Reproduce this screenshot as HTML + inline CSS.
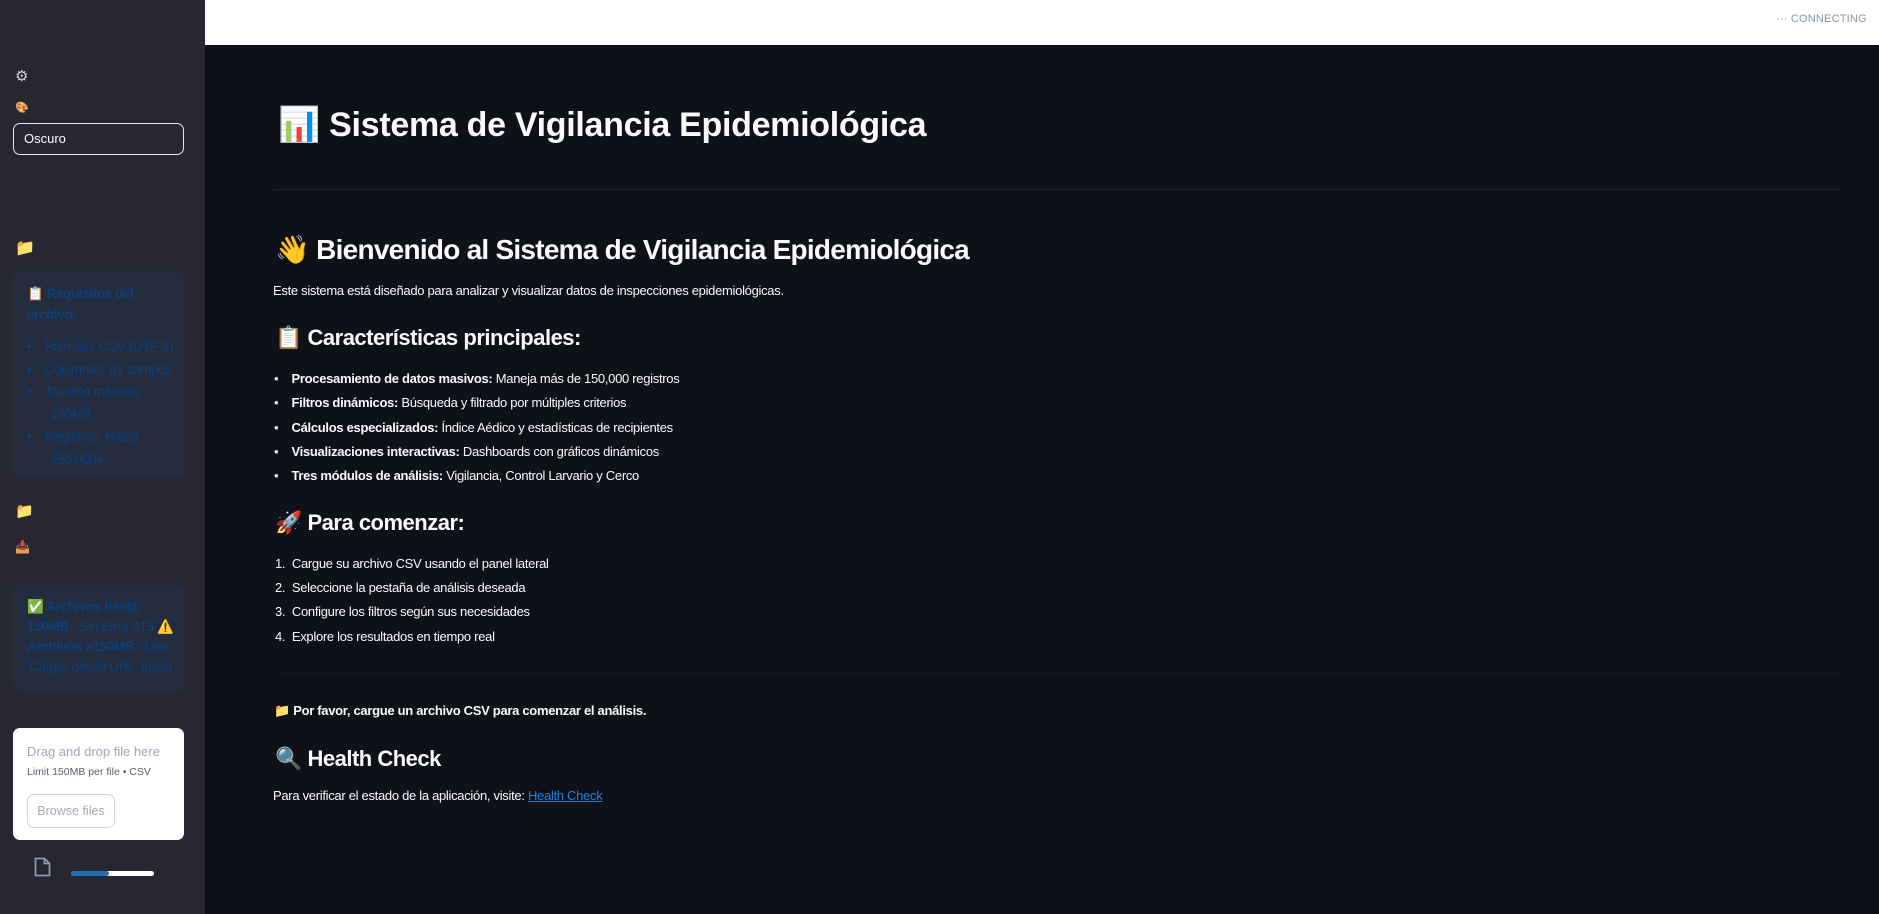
<!DOCTYPE html>
<html><head><meta charset="utf-8"><style>
*{margin:0;padding:0;box-sizing:border-box}
body{width:1879px;height:914px;overflow:hidden;background:#0e1117;font-family:"Liberation Sans","Noto Sans CJK JP",sans-serif;color:#fafafa;position:relative}
.a{position:absolute;white-space:nowrap}
#side{position:absolute;left:0;top:0;width:205px;height:914px;background:#262730}
#top{position:absolute;left:205px;top:0;width:1674px;height:45px;background:#fff}
.t{font-size:13px;letter-spacing:-0.3px}
.blue{color:#0d3f7a}
.s{font-size:13.5px;letter-spacing:-0.4px}
</style></head><body>
<div id="side"></div>
<div id="top"></div>
<div class="a" style="left:1776px;top:13px;font-size:11px;color:#8a93a8;letter-spacing:0.2px">··· CONNECTING</div>

<!-- sidebar -->
<div class="a" style="left:15px;top:67px;font-size:15px;color:#d9d3e8">⚙</div>
<div class="a" style="left:15px;top:101px;font-size:11px">🎨</div>
<div class="a" style="left:13px;top:123px;width:171px;height:32px;border:1px solid #e6e6e6;border-radius:7px;background:#262730"></div>
<div class="a" style="left:24px;top:131px;font-size:13px;color:#fff">Oscuro</div>
<div class="a" style="left:15px;top:238px;font-size:16px">📁</div>
<div class="a" style="left:13px;top:271px;width:171px;height:207px;background:#232d3f;border-radius:7px"></div>
<div class="a blue s" style="left:27px;top:283px;line-height:21px;font-weight:bold">📋 Requisitos del<br>archivo:</div>
<div class="a blue s" style="left:27px;top:336px;line-height:22.5px">•&nbsp;&nbsp;&nbsp;&nbsp;Formato: CSV (UTF-8)<br>•&nbsp;&nbsp;&nbsp;&nbsp;Columnas: 91 campos<br>•&nbsp;&nbsp;&nbsp;&nbsp;Tamaño máximo:<br>&nbsp;&nbsp;&nbsp;&nbsp;&nbsp;&nbsp;&nbsp;150MB<br>•&nbsp;&nbsp;&nbsp;&nbsp;Registros: Hasta<br>&nbsp;&nbsp;&nbsp;&nbsp;&nbsp;&nbsp;&nbsp;150,000+</div>
<div class="a" style="left:15px;top:502px;font-size:15px">📁</div>
<div class="a" style="left:15px;top:540px;font-size:12px">📥</div>
<div class="a" style="left:13px;top:585px;width:171px;height:106px;background:#232d3f;border-radius:7px"></div>
<div class="a blue s" style="left:27px;top:597px;line-height:20px"><b>✅ Archivos hasta<br>150MB</b> - Sin Error 413 ⚠️<br><b>Archivos &gt;150MB</b> - Use<br>'Cargar desde URL' abajo</div>
<div class="a" style="left:13px;top:728px;width:171px;height:112px;background:#fff;border-radius:7px"></div>
<div class="a" style="left:27px;top:744px;font-size:13px;color:#a3a8b8">Drag and drop file here</div>
<div class="a" style="left:27px;top:766px;font-size:10.5px;color:#5c5f6b">Limit 150MB per file • CSV</div>
<div class="a" style="left:27px;top:794px;width:88px;height:34px;border:1px solid #d5d6da;border-radius:7px;color:#a3a8b8;font-size:12.5px;text-align:center;line-height:32px">Browse files</div>
<svg class="a" style="left:34px;top:857px" width="17" height="20" viewBox="0 0 17 20"><path d="M1.5 1.5h9l5 5v12h-14z M10.5 1.5v5h5" fill="none" stroke="#8d96b0" stroke-width="1.8"/></svg>
<div class="a" style="left:71px;top:871px;width:83px;height:5px;background:#fff;border-radius:3px"></div>
<div class="a" style="left:71px;top:871px;width:38px;height:5px;background:#1f6fb5;border-radius:3px"></div>

<!-- main -->
<div class="a" style="left:278px;top:105px;font-size:34px;font-weight:bold;letter-spacing:-0.3px">📊 Sistema de Vigilancia Epidemiológica</div>
<div class="a" style="left:274px;top:189px;width:1568px;height:1px;background:#1f232b"></div>
<div class="a" style="left:275px;top:233px;font-size:28px;font-weight:bold;letter-spacing:-0.75px">👋 Bienvenido al Sistema de Vigilancia Epidemiológica</div>
<div class="a t" style="left:273px;top:283px">Este sistema está diseñado para analizar y visualizar datos de inspecciones epidemiológicas.</div>
<div class="a" style="left:275px;top:325px;font-size:22px;font-weight:bold;letter-spacing:-0.5px">📋 Características principales:</div>
<div class="a t" style="left:274px;top:367px;line-height:24.3px">•&nbsp;&nbsp;&nbsp;&nbsp;<b>Procesamiento de datos masivos:</b> Maneja más de 150,000 registros<br>•&nbsp;&nbsp;&nbsp;&nbsp;<b>Filtros dinámicos:</b> Búsqueda y filtrado por múltiples criterios<br>•&nbsp;&nbsp;&nbsp;&nbsp;<b>Cálculos especializados:</b> Índice Aédico y estadísticas de recipientes<br>•&nbsp;&nbsp;&nbsp;&nbsp;<b>Visualizaciones interactivas:</b> Dashboards con gráficos dinámicos<br>•&nbsp;&nbsp;&nbsp;&nbsp;<b>Tres módulos de análisis:</b> Vigilancia, Control Larvario y Cerco</div>
<div class="a" style="left:275px;top:510px;font-size:22px;font-weight:bold;letter-spacing:-0.5px">🚀 Para comenzar:</div>
<div class="a t" style="left:275px;top:552px;line-height:24.2px">1.&nbsp;&nbsp;Cargue su archivo CSV usando el panel lateral<br>2.&nbsp;&nbsp;Seleccione la pestaña de análisis deseada<br>3.&nbsp;&nbsp;Configure los filtros según sus necesidades<br>4.&nbsp;&nbsp;Explore los resultados en tiempo real</div>
<div class="a" style="left:274px;top:672px;width:1568px;height:1px;background:#13171e"></div>
<div class="a t" style="left:274px;top:703px;font-weight:bold">📁 Por favor, cargue un archivo CSV para comenzar el análisis.</div>
<div class="a" style="left:275px;top:746px;font-size:22px;font-weight:bold;letter-spacing:-0.5px">🔍 Health Check</div>
<div class="a t" style="left:273px;top:788px">Para verificar el estado de la aplicación, visite: <span style="color:#1c83e1;text-decoration:underline">Health Check</span></div>
</body></html>
